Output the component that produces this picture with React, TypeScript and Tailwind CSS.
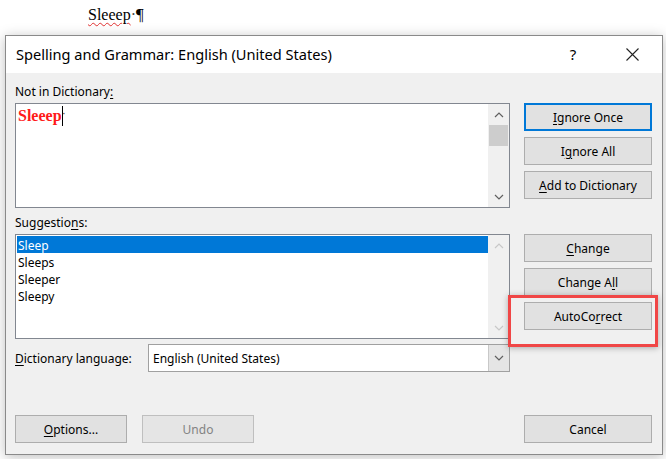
import { ReactNode } from "react";

const UI = "font-['Noto_Sans','Segoe_UI',sans-serif]";

function Btn({ children, w = "w-[128px]", focus = false, disabled = false }: { children: ReactNode; w?: string; focus?: boolean; disabled?: boolean }) {
  return (
    <div
      className={`${w} h-[28px] flex items-center justify-center bg-[#e1e1e1] text-[12px] ${
        focus ? "border-2 border-[#0078d7]" : "border border-[#adadad]"
      } ${disabled ? "text-[#838383] border-[#bfbfbf] bg-[#e5e5e5]" : "text-black"}`}
    >
      <span className="leading-[16px] pt-[2px]">{children}</span>
    </div>
  );
}

function Chevron({ up = false, color = "#606060" }: { up?: boolean; color?: string }) {
  return (
    <svg width="10" height="6" viewBox="0 0 10 6" className={up ? "rotate-180" : ""}>
      <path d="M1 1 L5 5 L9 1" fill="none" stroke={color} strokeWidth="1.2" />
    </svg>
  );
}

function ScrollBar({ thumb = false, disabled = false }: { thumb?: boolean; disabled?: boolean }) {
  const c = disabled ? "#c8c8c8" : "#606060";
  return (
    <div className="w-[21px] h-full bg-[#f0f0f0] flex flex-col">
      <div className="h-[21px] flex items-center justify-center">
        <Chevron up color={c} />
      </div>
      {thumb ? <div className="mx-[1px] h-[21px] bg-[#cdcdcd]" /> : null}
      <div className="flex-1" />
      <div className="h-[21px] flex items-center justify-center">
        <Chevron color={c} />
      </div>
    </div>
  );
}

export default function App() {
  const suggestions = ["Sleep", "Sleeps", "Sleeper", "Sleepy"];

  return (
    <div className={`relative w-[666px] h-[459px] bg-white overflow-hidden ${UI}`}>
      {/* ── Document text behind the dialog ── */}
      <div className="h-[35px] pl-[88px] pt-[5px] text-[16px] font-['Liberation_Serif',serif] text-black leading-[20px]">
        <span className="underline decoration-wavy decoration-[#e03030] decoration-1 underline-offset-2">Sleeep</span>
        <span className="text-[#444]">·</span>
        <span className="text-[17px]">¶</span>
      </div>

      {/* ── Dialog ── */}
      <div className="ml-[5px] w-[658px] h-[420px] border border-[#8a8a8a] bg-[#f0f0f0] shadow-[0_2px_12px_rgba(0,0,0,0.25)] flex flex-col">
        {/* Title bar */}
        <div className="h-[37px] bg-white flex items-center pl-[10px] text-black">
          <span className="text-[14.6px] flex-1">Spelling and Grammar: English (United States)</span>
          <span className="w-[20px] text-center text-[15px] mr-[43px]">?</span>
          <svg width="13" height="13" viewBox="0 0 13 13" className="mr-[23px]">
            <path d="M0.5 0.5 L12.5 12.5 M12.5 0.5 L0.5 12.5" stroke="#222" strokeWidth="1.1" />
          </svg>
        </div>

        {/* Body */}
        <div className="flex-1 px-[9px] text-[12px] text-black">
          {/* Not in dictionary */}
          <div className="mt-[10px] h-[18px] leading-[18px]">
            Not in Dictionary<span className="underline underline-offset-2">:</span>
          </div>
          <div className="mt-[2px] flex gap-[14px]">
            <div className="w-[495px] h-[105px] bg-white border border-[#828790] flex">
              <div className="flex-1 pl-[2px] pt-[2px] flex items-start">
                <span className="font-['Liberation_Serif',serif] font-bold text-[16px] text-[#ff1a1a] leading-[20px]">Sleeep</span>
                <span className="w-px h-[20px] bg-black" />
                <span className="text-[10px] leading-[14px] text-[#333]">·</span>
              </div>
              <ScrollBar thumb />
            </div>
            <div className="w-[128px] flex flex-col gap-[6px]">
              <Btn focus>
                <span className="underline underline-offset-2">I</span>gnore Once
              </Btn>
              <Btn>
                I<span className="underline underline-offset-2">g</span>nore All
              </Btn>
              <Btn>
                <span className="underline underline-offset-2">A</span>dd to Dictionary
              </Btn>
            </div>
          </div>

          {/* Suggestions */}
          <div className="mt-[6px] h-[18px] leading-[18px]">
            Suggestio<span className="underline underline-offset-2">n</span>s:
          </div>
          <div className="mt-[2px] flex gap-[14px]">
            <div className="w-[495px] h-[105px] bg-white border border-[#828790] flex">
              <div className="flex-1 pl-[1px] pt-[1px] flex flex-col">
                {suggestions.map((s, i) => (
                  <div key={s} className={`h-[17px] leading-[19px] pl-[1px] ${i === 0 ? "bg-[#0078d7] text-white" : ""}`}>
                    {s}
                  </div>
                ))}
              </div>
              <ScrollBar disabled />
            </div>
            <div className="w-[128px] flex flex-col gap-[6px]">
              <Btn>
                <span className="underline underline-offset-2">C</span>hange
              </Btn>
              <Btn>
                Change A<span className="underline underline-offset-2">l</span>l
              </Btn>
              <Btn>
                AutoCo<span className="underline underline-offset-2">r</span>rect
              </Btn>
            </div>
          </div>

          {/* Dictionary language */}
          <div className="mt-[5px] w-[495px] flex items-center">
            <div className="w-[133px] pt-[2px]">
              <span className="underline underline-offset-2">D</span>ictionary language:
            </div>
            <div className="flex-1 h-[28px] bg-white border border-[#a0a0a0] flex">
              <div className="flex-1 pl-[4px] leading-[28px]">English (United States)</div>
              <div className="w-[21px] bg-[#e5e5e5] border-l border-[#c8c8c8] flex items-center justify-center">
                <Chevron />
              </div>
            </div>
          </div>

          {/* Bottom buttons */}
          <div className="mt-[43px] flex">
            <Btn w="w-[112px]">
              <span className="underline underline-offset-2">O</span>ptions...
            </Btn>
            <div className="ml-[15px]">
              <Btn w="w-[112px]" disabled>
                Undo
              </Btn>
            </div>
            <div className="ml-auto mr-[1px]">
              <Btn>Cancel</Btn>
            </div>
          </div>
        </div>
      </div>

      {/* ── Highlight annotation ── */}
      <div className="absolute left-[508px] top-[295px] w-[150px] h-[52px] border-[3px] border-[#f04646] shadow-[0_1px_6px_rgba(0,0,0,0.3)]" />
    </div>
  );
}
